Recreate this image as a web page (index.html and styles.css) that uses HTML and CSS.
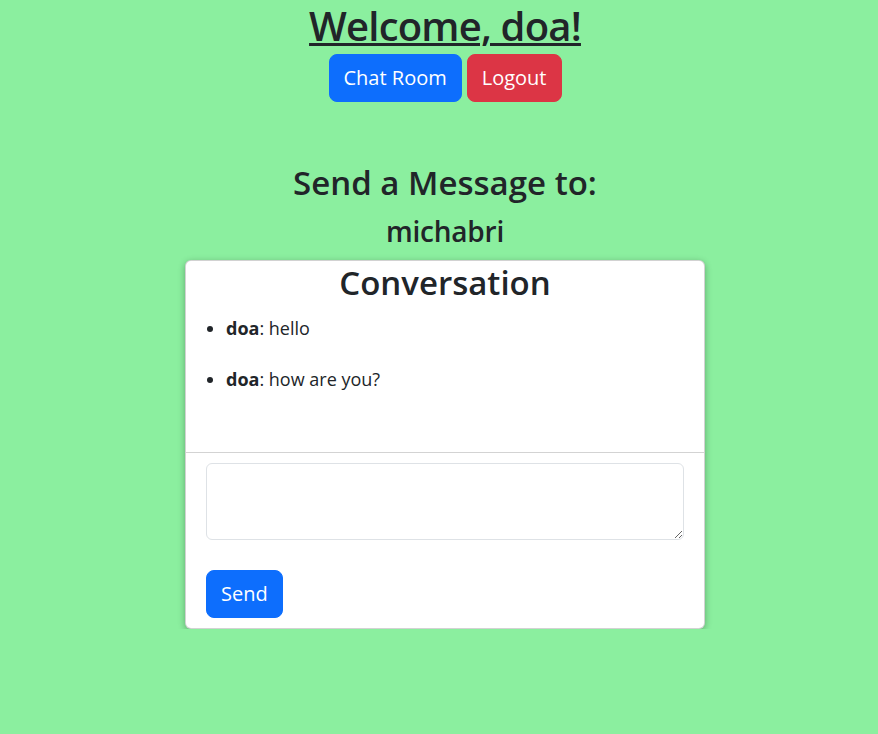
FILE: index.html
```html
<!DOCTYPE html>
<html lang="en">
<head>
<meta charset="utf-8">
<title>Chat</title>
<link rel="stylesheet" href="styles.css">
</head>
<body>
<div class="page">
  <h1 class="welcome"><a href="#" class="welcome-link">Welcome, doa!</a></h1>
  <div class="nav-buttons">
    <a href="#" class="btn btn-primary nav-btn">Chat Room</a>
    <a href="#" class="btn btn-danger nav-btn">Logout</a>
  </div>
  <h2 class="send-title">Send a Message to:</h2>
  <h3 class="recipient">michabri</h3>
  <div class="card">
    <div class="messages">
      <h2 class="conv-title">Conversation</h2>
      <ul class="msg-list">
        <li class="msg"><strong>doa</strong>: hello</li>
        <li class="msg"><strong>doa</strong>: how are you?</li>
      </ul>
    </div>
    <form class="compose">
      <textarea class="input"></textarea>
      <button type="button" class="btn btn-primary send-btn">Send</button>
    </form>
  </div>
</div>
</body>
</html>
```

FILE: styles.css
```css
* { box-sizing: border-box; }
html, body { margin: 0; padding: 0; }
body {
  background: #8bef9f;
  color: #212529;
  font-family: "Open Sans", "Noto Sans", sans-serif;
  font-size: 16px;
}
.page {
  padding-left: 12px;
  text-align: center;
}
.welcome {
  margin: 0 0 6px;
  padding-top: 3px;
  font-size: 40px;
  font-weight: 600;
  letter-spacing: -0.8px;
  line-height: 45px;
}
.welcome-link {
  color: #212529;
  text-decoration: underline;
  text-decoration-thickness: 3px;
  text-underline-offset: 2px;
}
.nav-buttons {
  display: flex;
  justify-content: center;
  gap: 5px;
}
.btn {
  display: inline-block;
  font-family: inherit;
  font-size: 20px;
  line-height: 30px;
  padding: 8px 16px;
  border: 1px solid transparent;
  border-radius: 8px;
  color: #fff;
  text-decoration: none;
  cursor: pointer;
}
.nav-btn { padding: 8px 14px; }
.btn-primary { background: #0d6efd; border-color: #0d6efd; }
.btn-danger { background: #dc3545; border-color: #dc3545; }
.send-title {
  margin: 62px 0 12px;
  font-size: 33px;
  font-weight: 600;
  line-height: 38px;
}
.recipient {
  margin: 0 0 12px;
  font-size: 28px;
  font-weight: 600;
  letter-spacing: -0.2px;
  line-height: 34px;
}
.card {
  width: 520px;
  margin: 0 auto;
  background: #fff;
  border: 1px solid rgba(0,0,0,.175);
  border-radius: 6px;
  box-shadow: 0 2px 7px rgba(0,0,0,.3);
  text-align: left;
}
.messages {
  height: 192px;
  border-bottom: 1px solid #d3d3d3;
}
.conv-title {
  margin: 0;
  text-align: center;
  font-size: 33px;
  font-weight: 600;
  line-height: 44px;
}
.msg-list {
  margin: 10px 0 0;
  padding-left: 40px;
}
.msg {
  font-size: 18px;
  line-height: 27px;
  margin-bottom: 24px;
}
.msg strong { font-weight: 700; }
.compose {
  padding: 10px 20px 10px;
}
.input {
  display: block;
  width: 100%;
  height: 77px;
  border: 1px solid #dee2e6;
  border-radius: 6px;
  font-family: inherit;
  font-size: 16px;
  resize: vertical;
  margin-bottom: 30px;
}
.send-btn {
  display: block;
  padding: 8px 14px;
}
```
